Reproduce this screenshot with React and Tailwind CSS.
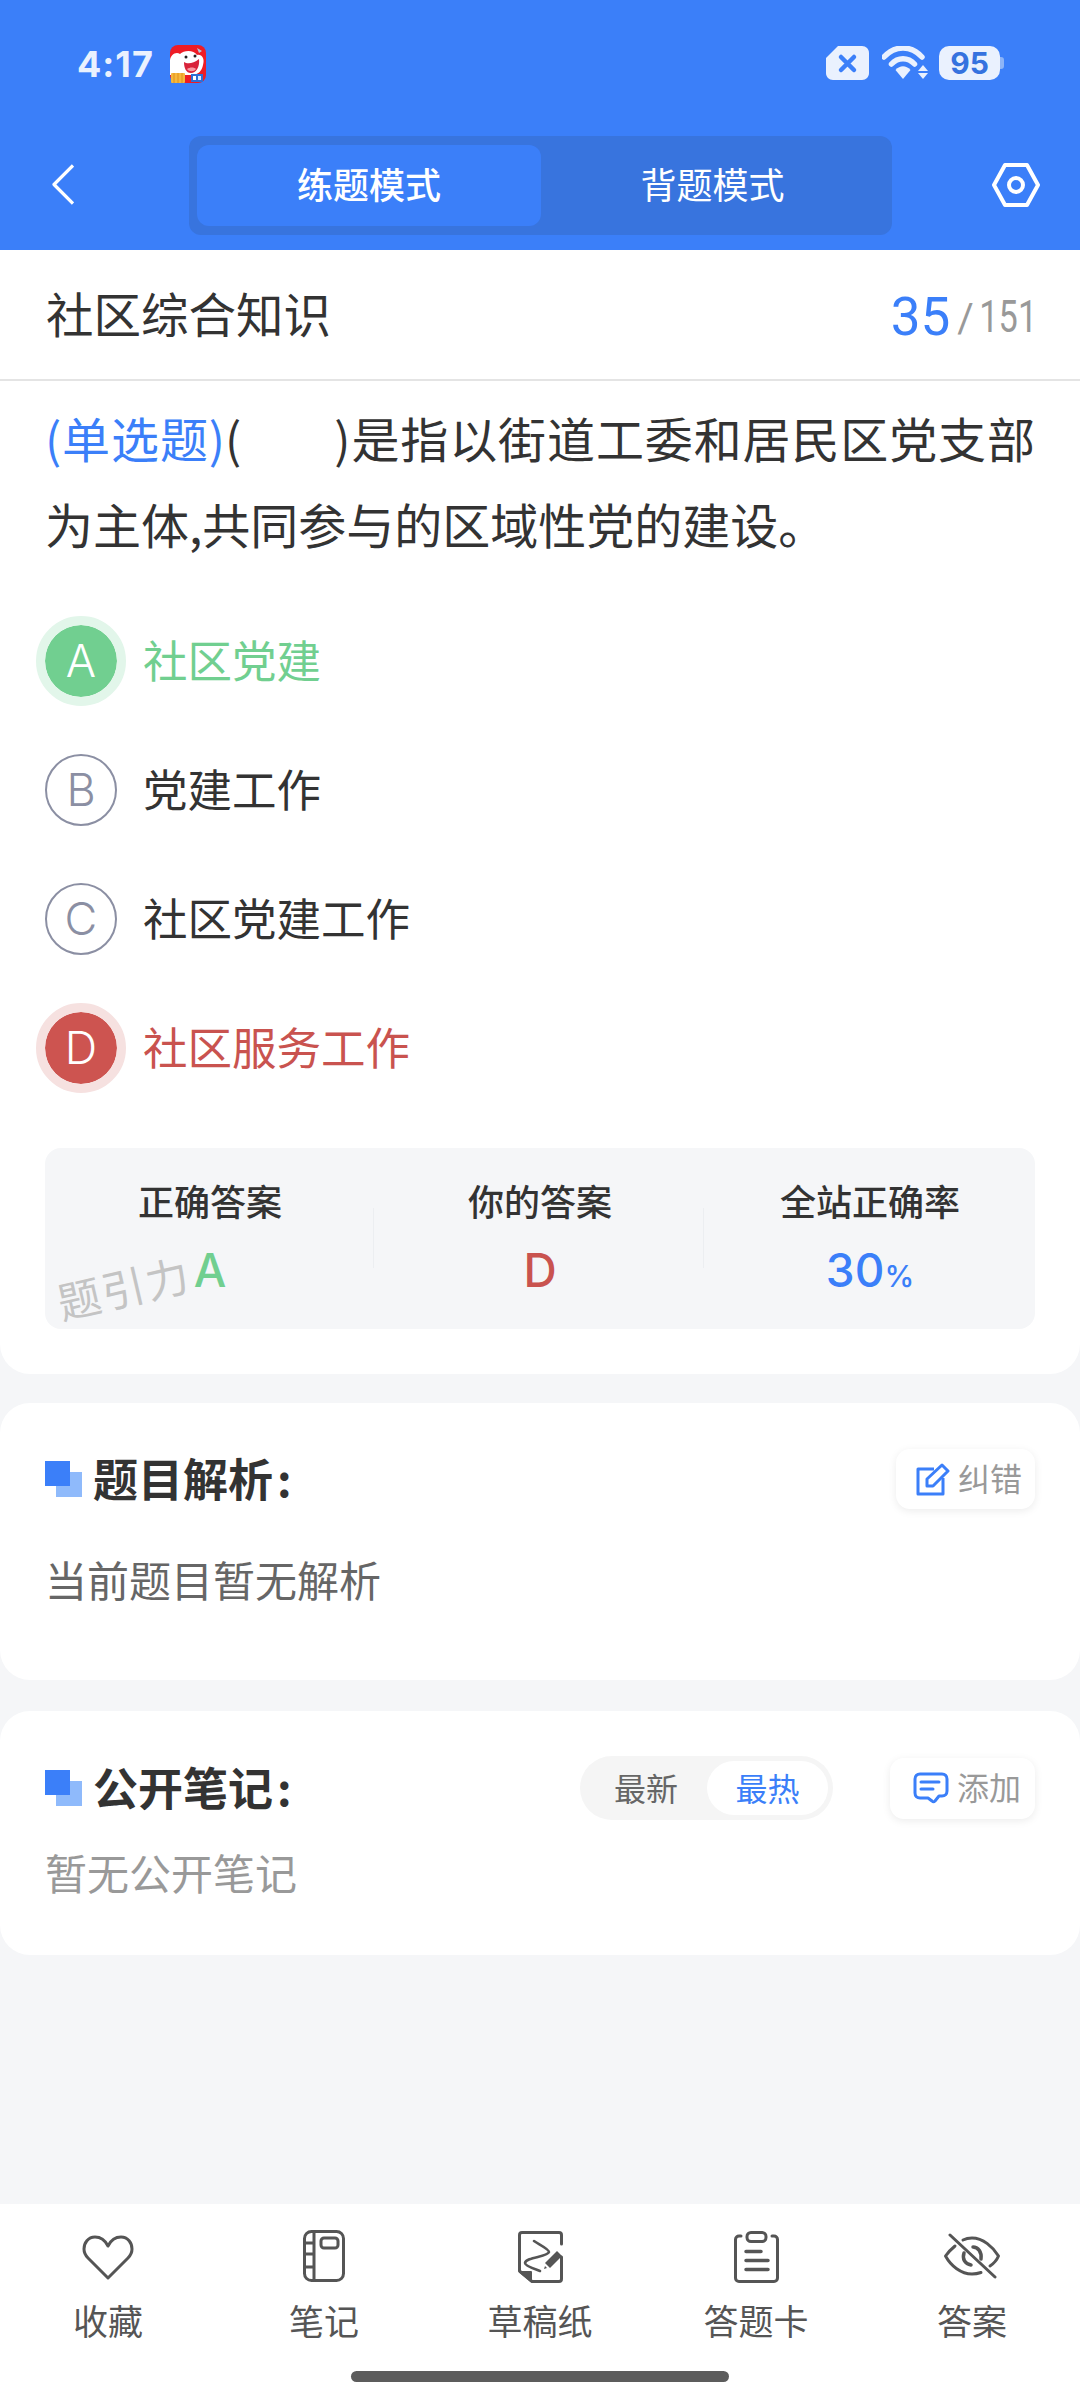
const CJK = "font-['Noto_Sans_CJK_SC','Noto_Sans',sans-serif]";

function AppIcon() {
  return (
    <svg width="36" height="38" viewBox="0 0 36 38" className="ml-[16px]">
      <rect x="0" y="0" width="36" height="38" rx="8" fill="#ee1c25" />
      <path d="M0 16C0 10 6 6 10 9C14 5 24 5 27 10C32 9 35 14 33 20C32 26 28 29 24 30L0 30Z" fill="#fff" />
      <path d="M14 17C17 19 23 19 29 14C30 22 26 28 21 28C16 28 14 23 14 17Z" fill="#d8233a" />
      <path d="M17 24C20 22 24 22 26 24C24 27 19 27 17 24Z" fill="#f79ba3" />
      <circle cx="16" cy="12" r="1.5" fill="#222" />
      <circle cx="25" cy="11" r="1.5" fill="#222" />
      <path d="M27 3L32 6L29 8Z" fill="#b9c9dc" />
      <rect x="1" y="28" width="14" height="10" rx="1" fill="#f6b73c" />
      <path d="M4 28V38M8 28V38M12 28V38" stroke="#e0901f" strokeWidth="1" />
      <rect x="21" y="29" width="12" height="8" fill="#2f6fd6" />
      <rect x="23" y="31" width="3" height="4" fill="#fff" />
      <rect x="28" y="31" width="3" height="4" fill="#dbe8ff" />
    </svg>
  );
}

function StatusIcons() {
  return (
    <div className="flex items-center">
      <svg width="43" height="34" viewBox="0 0 43 34">
        <path d="M12 0H36C40 0 43 3 43 7V27C43 31 40 34 36 34H7C3 34 0 31 0 27V12Z" fill="#eaf1fe" />
        <path d="M15 11L28 24M28 11L15 24" stroke="#3b7ff9" strokeWidth="4.5" strokeLinecap="round" />
      </svg>
      <svg width="46" height="34" viewBox="0 0 46 34" className="ml-[13px]">
        <path d="M2 11C13 -1 29 -1 40 11" stroke="#eaf1fe" strokeWidth="5.5" fill="none" strokeLinecap="round" />
        <path d="M9.5 18C16 11 26 11 32.5 18" stroke="#eaf1fe" strokeWidth="5.5" fill="none" strokeLinecap="round" />
        <path d="M13.5 24C18 19 24 19 28.5 24L21 33Z" fill="#eaf1fe" />
        <path d="M41 19L46 25H36Z" fill="#eaf1fe" />
        <path d="M36 27H46L41 33Z" fill="#eaf1fe" />
      </svg>
      <div className="ml-[11px] flex items-center">
        <div className="w-[61px] h-[34px] rounded-[10px] bg-[#eaf1fe] flex items-center justify-center text-[#3572df] text-[30px] font-bold font-['Inter',sans-serif] leading-none">95</div>
        <div className="w-[4px] h-[12px] rounded-r-[3px] bg-[#8db4f7]" />
      </div>
    </div>
  );
}

function StatusBar() {
  return (
    <div className="h-[136px] pl-[77px] pr-[76px] pt-[45px] flex items-start justify-between">
      <div className="flex items-center h-[38px]">
        <span className="text-[36px] tracking-[1px] font-bold leading-none text-[#eaf1fe] font-['Inter',sans-serif]">4:17</span>
        <AppIcon />
      </div>
      <div className="flex items-center h-[36px]">
        <StatusIcons />
      </div>
    </div>
  );
}

function NavBar() {
  return (
    <div className="h-[114px] flex items-start pl-[52px]">
      <svg width="22" height="41" viewBox="0 0 22 41" className="mt-[28px]">
        <path d="M21 1.5L2 20.5L21 39.5" stroke="#fff" strokeWidth="3.2" fill="none" strokeLinejoin="round" />
      </svg>
      <div className="ml-[115px] w-[703px] h-[99px] rounded-[12px] bg-[#3874de] p-[8px] pt-[9px] flex">
        <div className={`w-[344px] h-[81px] pb-[5px] rounded-[12px] bg-[#3b7ff9] flex items-center justify-center text-white text-[36px] font-medium ${CJK}`}>练题模式</div>
        <div className={`flex-1 h-[81px] pb-[5px] flex items-center justify-center text-white text-[36px] ${CJK}`}>背题模式</div>
      </div>
      <svg width="48" height="44" viewBox="0 0 48 44" className="ml-[100px] mt-[27px]">
        <path d="M13 2H35L46 22L35 42H13L2 22Z" stroke="#fff" strokeWidth="4" fill="none" strokeLinejoin="round" />
        <circle cx="24" cy="22" r="7" stroke="#fff" strokeWidth="4" fill="none" />
      </svg>
    </div>
  );
}

function Option({ letter, text, state }) {
  const styles = {
    ok: { ring: "border-[9px] border-[#e2f6ea] bg-[#71cf90] text-white bg-clip-padding", label: "text-[#71cf90]" },
    bad: { ring: "border-[9px] border-[#f6e1e0] bg-[#cd5450] text-white bg-clip-padding", label: "text-[#c9534f]" },
    none: { ring: "", label: "text-[#333333]" },
  }[state];
  const letterFont = "text-[45px] font-light font-['Inter',sans-serif]";
  return (
    <div className="h-[129px] flex items-center">
      {state === "none" ? (
        <div className="w-[90px] h-[90px] flex items-center justify-center shrink-0">
          <div className={`w-[72px] h-[72px] rounded-full border-2 border-[#8b8fa3] flex items-center justify-center text-[#8b8fa3] ${letterFont}`}>{letter}</div>
        </div>
      ) : (
        <div className={`w-[90px] h-[90px] rounded-full flex items-center justify-center shrink-0 ${letterFont} ${styles.ring}`}>{letter}</div>
      )}
      <div className={`ml-[17px] pb-[2px] text-[44.5px] leading-none ${CJK} ${styles.label}`}>{text}</div>
    </div>
  );
}

function Stat({ label, children, divider }) {
  return (
    <div className="relative flex-1 flex flex-col items-center pt-[34px]">
      <div className={`text-[36px] leading-[36px] font-medium text-[#333333] ${CJK}`}>{label}</div>
      <div className="mt-[27px] leading-[50px] h-[50px] flex items-baseline font-medium font-['Inter',sans-serif]">{children}</div>
      {divider && <div className="absolute right-[1px] top-[60px] h-[60px] w-[1px] bg-[#eceef1]" />}
    </div>
  );
}

function StatsBox() {
  return (
    <div className="relative h-[181px] rounded-[16px] bg-[#f5f6f8] flex">
      <Stat label="正确答案" divider><span className="text-[46px] text-[#71cf90]">A</span></Stat>
      <Stat label="你的答案" divider><span className="text-[46px] text-[#c9534f]">D</span></Stat>
      <Stat label="全站正确率">
        <span className="text-[46px] text-[#3b7ff9]">30</span>
        <span className="text-[30px] text-[#3b7ff9]">%</span>
      </Stat>
      <div className={`absolute left-[11px] top-[117px] text-[43px] leading-none text-[#c4c4c4] -rotate-[13deg] tracking-[2px] ${CJK}`}>题引力</div>
    </div>
  );
}

function SectionTitle({ children }) {
  return (
    <div className="flex items-center">
      <div className="relative w-[37px] h-[36px]">
        <div className="absolute left-[11px] top-[11px] w-[26px] h-[25px] bg-[#8fbafb]" />
        <div className="absolute left-0 top-0 w-[25px] h-[25px] bg-[#3b7ff9]" />
      </div>
      <div className={`ml-[11px] pb-[4px] text-[45px] leading-none font-semibold text-[#333333] ${CJK}`}>{children}<span className="ml-[4px]">:</span></div>
    </div>
  );
}

function ChipButton({ icon, text, className }) {
  return (
    <div className={`flex items-center rounded-[14px] bg-white shadow-[0_2px_8px_rgba(0,0,0,0.08)] ${className}`}>
      {icon}
      <span className={`ml-[8px] pb-[5px] text-[32px] leading-none text-[#999999] ${CJK}`}>{text}</span>
    </div>
  );
}

const EditIcon = (
  <svg width="34" height="34" viewBox="0 0 34 34">
    <path d="M18 7H2V32H27V16" stroke="#3b7ff9" strokeWidth="3" fill="none" strokeLinejoin="round" />
    <path d="M11 24V17L26 3L32 9L17 24Z" stroke="#3b7ff9" strokeWidth="3" fill="none" strokeLinejoin="round" />
  </svg>
);

const NoteIcon = (
  <svg width="36" height="32" viewBox="0 0 36 32">
    <path d="M7 2H29C32 2 34 4 34 7V19C34 22 32 24 29 24H26L22 29C21 30 20 30 19 29L15 26H7C4 26 2 24 2 21V7C2 4 4 2 7 2Z" stroke="#3b7ff9" strokeWidth="3" fill="none" strokeLinejoin="round" />
    <path d="M8 10H26M8 17H20" stroke="#3b7ff9" strokeWidth="3" strokeLinecap="round" />
  </svg>
);

function BottomItem({ icon, label }) {
  return (
    <div className="flex-1 flex flex-col items-center">
      <div className="h-[54px] flex items-center justify-center">{icon}</div>
      <div className={`mt-[19px] text-[35px] leading-none text-[#555555] ${CJK}`}>{label}</div>
    </div>
  );
}

const s = { stroke: "#555555", strokeWidth: 3, fill: "none", strokeLinejoin: "round", strokeLinecap: "round" };

const Heart = (
  <svg width="52" height="45" viewBox="0 0 52 45" className="mt-[3px]">
    <path d="M26 11C23 5 18 2 13 2C6 2 2 8 2 14C2 18 4 21 6 23L26 43L46 23C48 21 50 18 50 14C50 8 46 2 39 2C34 2 29 5 26 11Z" {...s} />
  </svg>
);
const Notebook = (
  <svg width="42" height="52" viewBox="0 0 42 52" className="-mt-[1px]">
    <rect x="1.5" y="1.5" width="39" height="49" rx="7" {...s} />
    <path d="M11 1.5V50.5M1.5 13H11M1.5 24H11M1.5 37H11" {...s} />
    <rect x="18" y="8" width="17" height="10" rx="3" {...s} />
  </svg>
);
const Draft = (
  <svg width="45" height="52" viewBox="0 0 45 52" className="mt-[1px]">
    <path d="M43.5 13V4C43.5 2.5 42.5 1.5 41 1.5H4C2.5 1.5 1.5 2.5 1.5 4V40L14 50.5H41C42.5 50.5 43.5 49.5 43.5 48V26" {...s} />
    <path d="M2 41H13V50Z" fill="#555555" stroke="#555555" strokeWidth="2" strokeLinejoin="round" />
    <path d="M16 10C20 13 31 18 31 21C30 26 8 26 7 32C7 35 17 38 22 40" {...s} strokeWidth="2.6" />
    <path d="M27 32L39 20L44 25L32 37Z" fill="#555555" />
    <path d="M27 35L26 38L29 37Z" fill="#555555" />
  </svg>
);
const Clipboard = (
  <svg width="45" height="52" viewBox="0 0 45 52" className="mt-[1px]">
    <path d="M7 5H5C3 5 1.5 6.5 1.5 8.5V47C1.5 49 3 50.5 5 50.5H40C42 50.5 43.5 49 43.5 47V8.5C43.5 6.5 42 5 40 5H38" {...s} />
    <rect x="13" y="1.5" width="19" height="9" rx="4" {...s} />
    <path d="M12 20.5H27M12 29.5H34M12 38.5H34" {...s} strokeWidth="3.5" />
  </svg>
);
const EyeOff = (
  <svg width="58" height="46" viewBox="0 0 58 46">
    <path d="M12 13Q6 18 2.5 23C8 33 18 41 29 41C32 41 35 40.5 38 39.5" {...s} />
    <path d="M20 7Q24 5 29 5C40 5 50 14 55.5 23Q53 29 47 33" {...s} />
    <path d="M21 20C19 26 22 31 28 32" {...s} strokeWidth="3.5" />
    <path d="M30 14C35 14 39 19 38 26" {...s} strokeWidth="3.5" />
    <path d="M7 2L52 44" {...s} />
  </svg>
);

export default function App() {
  return (
    <div className={`relative w-[1080px] h-[2400px] overflow-hidden flex flex-col bg-[#f5f6f8] ${CJK}`}>
      <header className="h-[250px] bg-[#3b7ff9] shrink-0">
        <StatusBar />
        <NavBar />
      </header>

      <section className="h-[1124px] bg-white rounded-b-[30px] shrink-0">
        <div className="h-[131px] pl-[46px] pr-[43px] flex items-center justify-between border-b-2 border-[#e4e4e4]">
          <div className="pb-[3px] text-[47.5px] leading-none text-[#333333]">社区综合知识</div>
          <div className="mt-[6px] flex items-baseline font-['Roboto',sans-serif]">
            <span className="text-[53px] leading-none text-[#3b7ff9]">35</span>
            <span className="ml-[7px] text-[40px] leading-none text-[#999999] -translate-y-[3px]">/</span>
            <span className="-ml-[11px] text-[44px] leading-none text-[#999999] inline-block origin-right scale-x-[0.78] -translate-y-[3px]">151</span>
          </div>
        </div>
        <div className="px-[45px]">
          <p className="pt-[13px] text-[48px] leading-[86px] text-[#333333] text-justify">
            <span className="text-[#3b7ff9]">(单选题)</span>
            (&nbsp;&nbsp;&nbsp;&nbsp;&nbsp;&nbsp;&nbsp;&nbsp;)是指以街道工委和居民区党支部为主体,共同参与的区域性党的建设。
          </p>
          <div className="mt-[30px] -ml-[9px]">
            <Option letter="A" text="社区党建" state="ok" />
            <Option letter="B" text="党建工作" state="none" />
            <Option letter="C" text="社区党建工作" state="none" />
            <Option letter="D" text="社区服务工作" state="bad" />
          </div>
          <div className="mt-[36px]">
            <StatsBox />
          </div>
        </div>
      </section>

      <section className="mt-[29px] h-[277px] bg-white rounded-[30px] shrink-0 px-[45px] pt-[46px]">
        <div className="flex items-center justify-between h-[60px]">
          <SectionTitle>题目解析</SectionTitle>
          <ChipButton icon={EditIcon} text="纠错" className="h-[60px] pl-[20px] pr-[13px]" />
        </div>
        <div className="mt-[46px] text-[42px] leading-[48px] text-[#666666]">当前题目暂无解析</div>
      </section>

      <section className="mt-[31px] h-[244px] bg-white rounded-[30px] shrink-0 px-[45px] pt-[45px]">
        <div className="flex items-center justify-between h-[64px]">
          <SectionTitle>公开笔记</SectionTitle>
          <div className="flex items-center">
            <div className="w-[253px] h-[64px] rounded-full bg-[#f5f5f5] flex items-center p-[5px] text-[32px] leading-none">
              <div className="flex-1 pb-[3px] text-center text-[#666666]">最新</div>
              <div className="w-[121px] h-[54px] pb-[3px] rounded-full bg-white flex items-center justify-center text-[#3b7ff9]">最热</div>
            </div>
            <ChipButton icon={NoteIcon} text="添加" className="ml-[57px] w-[145px] h-[61px] pl-[23px]" />
          </div>
        </div>
        <div className="mt-[28px] text-[42px] leading-[48px] text-[#999999]">暂无公开笔记</div>
      </section>

      <div className="flex-1" />

      <footer className="relative h-[196px] bg-white shrink-0 pt-[25px]">
        <div className="flex">
          <BottomItem icon={Heart} label="收藏" />
          <BottomItem icon={Notebook} label="笔记" />
          <BottomItem icon={Draft} label="草稿纸" />
          <BottomItem icon={Clipboard} label="答题卡" />
          <BottomItem icon={EyeOff} label="答案" />
        </div>
        <div className="absolute left-[351px] top-[167px] w-[378px] h-[11px] rounded-full bg-[#5c5c5c]" />
      </footer>
    </div>
  );
}
